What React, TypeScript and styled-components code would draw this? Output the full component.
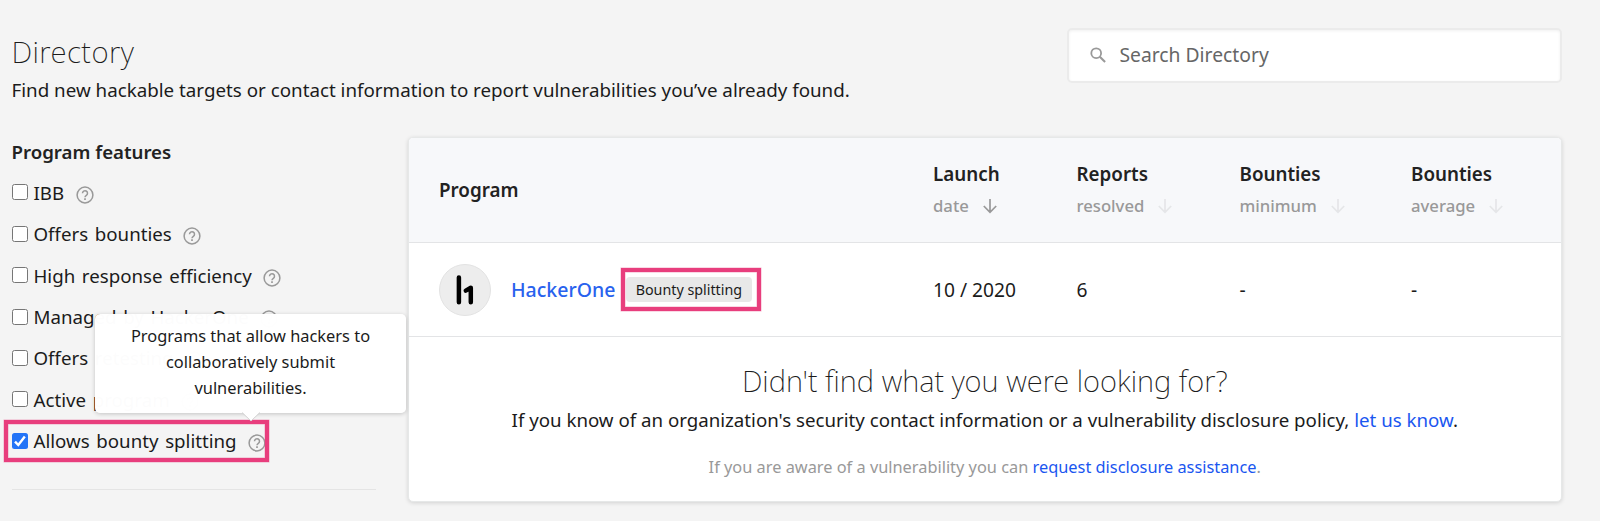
import React from 'react';
import styled, { createGlobalStyle } from 'styled-components';

const GlobalStyle = createGlobalStyle`
  *, *::before, *::after { box-sizing: border-box; }
  body {
    margin: 0;
    background: #f4f4f4;
    color: #1b1b1b;
    font-family: 'Noto Sans', 'Open Sans', sans-serif;
    font-size: 18.8px;
    line-height: 28px;
    overflow: hidden;
  }
`;

const Page = styled.div`
  width: 1600px;
  height: 521px;
  padding: 28px 38px 0 12px;
`;

const Header = styled.header`
  display: flex;
  justify-content: space-between;
  height: 109px;
`;

const Intro = styled.div`
  padding-top: 4px;
`;

const Title = styled.h1`
  margin: 0 0 4px -0.5px;
  font-size: 29.5px;
  font-weight: 170;
  line-height: 40px;
  letter-spacing: 0.4px;
`;

const Subtitle = styled.p`
  margin: 0 0 0 -0.5px;
  font-size: 18.78px;
  white-space: nowrap;
`;

const SearchBox = styled.label`
  display: flex;
  align-items: center;
  gap: 13.5px;
  width: 495.5px;
  height: 54.5px;
  padding-left: 21.5px;
  background: #fff;
  border: 2px solid #ebebeb;
  border-radius: 5px;
  box-shadow: inset 0 1px 3px rgba(0, 0, 0, 0.06);
`;

const SearchInput = styled.input`
  flex: 1;
  border: 0;
  outline: 0;
  padding: 0;
  background: transparent;
  font: inherit;
  font-size: 19.3px;
  color: #666;
  &::placeholder { color: #666; opacity: 1; }
`;

const Main = styled.main`
  display: flex;
  gap: 31.5px;
`;

const Sidebar = styled.aside`
  width: 364px;
  padding-top: 1px;
`;

const SidebarTitle = styled.h2`
  margin: 0 0 6px -0.5px;
  font-size: 18.65px;
  font-weight: 600;
  line-height: 28px;
  color: #222;
`;

const FeatureList = styled.ul`
  list-style: none;
  margin: 0 0 27px;
  padding: 0;
`;

const FeatureRow = styled.li`
  position: relative;
  display: flex;
  align-items: center;
  height: 41.45px;
  font-size: 18.7px;
  word-spacing: 1.8px;
  white-space: nowrap;
`;

const FeatureLabel = styled.label`
  display: flex;
  align-items: center;
`;

const Checkbox = styled.input`
  appearance: none;
  flex: none;
  width: 16px;
  height: 16px;
  margin: 0 5.5px 1px 0;
  border: 1px solid #767676;
  border-radius: 2.5px;
  background: #fff;
  &:checked { border: 0; background: #2374f7; }
`;

const CheckMark = styled.svg`
  position: absolute;
  left: 0;
  top: 12px;
  width: 16px;
  height: 16px;
`;

const HelpIcon = styled.svg`
  width: 18px;
  height: 18px;
  margin: 4px 0 0 11.5px;
  color: #999;
`;

const Highlight = styled.span<{ $top: number; $left: number; $width: number; $height: number }>`
  position: absolute;
  top: ${p => p.$top}px;
  left: ${p => p.$left}px;
  width: ${p => p.$width}px;
  height: ${p => p.$height}px;
  border: 4px solid #e83e7d;
  box-shadow: 0 0 0 0.5px rgba(232, 62, 125, 0.4), inset 0 0 0 0.5px rgba(232, 62, 125, 0.4);
  pointer-events: none;
`;

const Tooltip = styled.div`
  position: absolute;
  left: 83px;
  bottom: 49px;
  width: 311px;
  height: 99px;
  padding: 9px 30px;
  border-radius: 5px;
  background: rgba(255, 255, 255, 0.99);
  box-shadow: 0 1px 4px rgba(0, 0, 0, 0.2);
  font-size: 16.4px;
  line-height: 26px;
  word-spacing: 0;
  text-align: center;
  white-space: normal;
`;

const TooltipArrow = styled.svg`
  position: absolute;
  left: 147px;
  top: 98px;
  width: 18px;
  height: 10px;
`;

const Divider = styled.hr`
  margin: 0;
  border: 0;
  height: 1px;
  background: #e4e4e4;
`;

const Card = styled.section`
  width: 1154.5px;
  height: 365px;
  border: 1px solid #e6e8e8;
  border-radius: 5px;
  background: #fff;
  box-shadow: 0 1px 4px rgba(0, 0, 0, 0.14);
  overflow: hidden;
`;

const TableRow = styled.div<{ $head?: boolean }>`
  display: grid;
  grid-template-columns: 494px 143.5px 163px 171.5px 1fr;
  align-items: center;
  height: ${p => (p.$head ? 105 : 94)}px;
  padding-left: 30.5px;
  background: ${p => (p.$head ? '#f7f8fa' : '#fff')};
  border-bottom: 1px solid #e3e4e6;
`;

const HeadName = styled.div`
  font-size: 18.8px;
  font-weight: 600;
  line-height: 28px;
  color: #222;
`;

const HeadSub = styled.div`
  display: flex;
  align-items: center;
  height: 28px;
  margin-top: 4px;
  font-size: 16.7px;
  font-weight: 500;
  color: #999;
`;

const HeadCell = styled.div`
  margin-top: -1px;
`;

const SortArrow = styled.svg<{ $active?: boolean }>`
  width: 16px;
  height: 16px;
  margin-left: 13px;
  color: ${p => (p.$active ? '#999' : '#e5e6e8')};
`;

const ProgramCell = styled.div`
  position: relative;
  display: flex;
  align-items: center;
`;

const Value = styled.span`
  font-size: 19.2px;
`;

const Avatar = styled.svg`
  width: 52px;
  height: 52px;
  margin-right: 20px;
`;

const Link = styled.a`
  color: #1a56f0;
  text-decoration: none;
`;

const ProgramLink = styled(Link)`
  color: #2862ee;
  font-size: 19.5px;
  font-weight: 500;
`;

const Badge = styled.span`
  display: flex;
  align-items: center;
  justify-content: center;
  width: 126px;
  height: 25px;
  margin-left: 10.5px;
  border-radius: 4px;
  background: #e8e8e8;
  font-size: 14.3px;
`;

const Empty = styled.div`
  padding-top: 24px;
  text-align: center;
`;

const EmptyTitle = styled.h2`
  margin: 0;
  font-size: 29.2px;
  font-weight: 170;
  line-height: 40px;
`;

const EmptyText = styled.p`
  margin: 5px 0 0;
  font-size: 18.72px;
`;

const EmptyHint = styled.p`
  margin: 19px 0 0;
  color: #999;
  font-size: 16.35px;
`;

const features = [
  { name: 'IBB' },
  { name: 'Offers bounties' },
  { name: 'High response efficiency' },
  { name: 'Managed by HackerOne' },
  { name: 'Offers retesting' },
  { name: 'Active program' },
  { name: 'Allows bounty splitting', checked: true },
];

const columns = [
  { name: 'Launch', sub: 'date', active: true },
  { name: 'Reports', sub: 'resolved' },
  { name: 'Bounties', sub: 'minimum' },
  { name: 'Bounties', sub: 'average' },
];

const Help = () => (
  <HelpIcon viewBox="0 0 18 18" fill="none" stroke="currentColor" strokeWidth="1.5">
    <circle cx="9" cy="9" r="7.9" />
    <path d="M6.5 7.3a2.5 2.5 0 1 1 3.9 2c-.9.6-1.4.9-1.4 2" />
    <path d="M9 12.3v1.6" strokeWidth="1.7" />
  </HelpIcon>
);

export default function App() {
  return (
    <>
      <GlobalStyle />
      <Page>
        <Header>
          <Intro>
            <Title>Directory</Title>
            <Subtitle>
              Find new hackable targets or contact information to report vulnerabilities you’ve already found.
            </Subtitle>
          </Intro>
          <SearchBox>
            <svg width="16" height="16" viewBox="0 0 16 16" fill="none" stroke="#999" strokeWidth="1.8">
              <circle cx="6.2" cy="6.2" r="4.9" />
              <path d="M9.8 9.8l5.3 5.3" strokeWidth="2.1" />
            </svg>
            <SearchInput placeholder="Search Directory" />
          </SearchBox>
        </Header>
        <Main>
          <Sidebar>
            <SidebarTitle>Program features</SidebarTitle>
            <FeatureList>
              {features.map(f => (
                <FeatureRow key={f.name}>
                  <FeatureLabel>
                    <Checkbox type="checkbox" defaultChecked={f.checked} />
                    {f.name}
                  </FeatureLabel>
                  <Help />
                  {f.checked && (
                    <>
                      <CheckMark viewBox="0 0 16 16" fill="none" stroke="#fff" strokeWidth="2.4">
                        <path d="M3 8.6l3.3 3.4L12.8 3.6" />
                      </CheckMark>
                      <Highlight $top={-0.5} $left={-8} $width={265} $height={41.5} />
                      <Tooltip>
                        Programs that allow hackers to collaboratively submit vulnerabilities.
                        <TooltipArrow viewBox="0 0 18 10">
                          <path d="M0 0h18L9 9z" fill="#fff" />
                          <path d="M0 .5l9 8.5 9-8.5" fill="none" stroke="#d2d2d2" />
                        </TooltipArrow>
                      </Tooltip>
                    </>
                  )}
                </FeatureRow>
              ))}
            </FeatureList>
            <Divider />
          </Sidebar>
          <Card>
            <TableRow $head>
              <HeadName>Program</HeadName>
              {columns.map(c => (
                <HeadCell key={c.sub}>
                  <HeadName>{c.name}</HeadName>
                  <HeadSub>
                    {c.sub}
                    <SortArrow $active={c.active} viewBox="0 0 16 16" fill="none" stroke="currentColor" strokeWidth="1.7">
                      <path d="M8 1v13M1.8 8l6.2 6.3L14.2 8" />
                    </SortArrow>
                  </HeadSub>
                </HeadCell>
              ))}
            </TableRow>
            <TableRow>
              <ProgramCell>
                <Avatar viewBox="0 0 52 52">
                  <circle cx="26" cy="26" r="25.5" fill="#ededed" stroke="#e2e2e2" />
                  <path
                    d="M19.9 13.5v24.7M31.8 38.2V23.8L26.8 26.6"
                    fill="none"
                    stroke="#000"
                    strokeWidth="4.5"
                    strokeLinecap="round"
                    strokeLinejoin="round"
                  />
                </Avatar>
                <ProgramLink href="#">HackerOne</ProgramLink>
                <Badge>Bounty splitting</Badge>
                <Highlight $top={4.5} $left={182} $width={140} $height={43} />
              </ProgramCell>
              <Value>10 / 2020</Value>
              <Value>6</Value>
              <Value>-</Value>
              <Value>-</Value>
            </TableRow>
            <Empty>
              <EmptyTitle>Didn't find what you were looking for?</EmptyTitle>
              <EmptyText>
                If you know of an organization's security contact information or a vulnerability disclosure policy,{' '}
                <Link href="#">let us know</Link>.
              </EmptyText>
              <EmptyHint>
                If you are aware of a vulnerability you can <Link href="#">request disclosure assistance</Link>.
              </EmptyHint>
            </Empty>
          </Card>
        </Main>
      </Page>
    </>
  );
}
